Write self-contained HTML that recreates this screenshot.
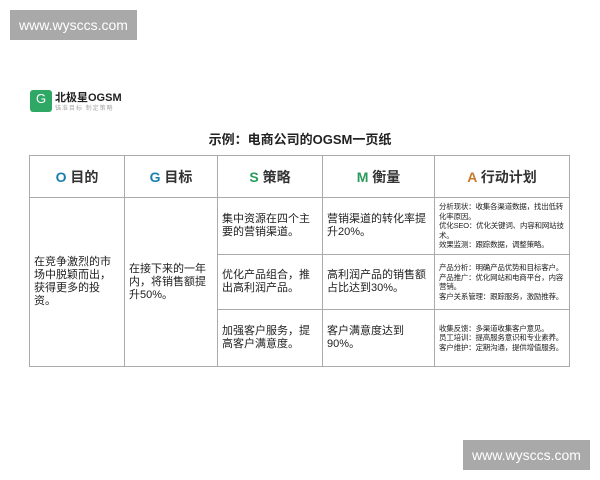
<!DOCTYPE html>
<html><head><meta charset="utf-8"><style>
body{margin:0;width:600px;height:480px;background:#fff;position:relative;overflow:hidden;font-family:"Liberation Sans","Noto Sans CJK SC",sans-serif;color:#222}
.wm{position:absolute;background:#a9a9a9;color:#fff;font-size:14px;width:127px;height:30px;line-height:30px;text-align:center}
.abs{position:absolute}
table{position:absolute;left:29px;top:155px;width:540px;table-layout:fixed;border-collapse:collapse;border:1.5px solid #666}
td{border:1px solid #aaa;font-size:11px;line-height:13px;padding:0 4px;vertical-align:middle;overflow:hidden}
th{border:1px solid #aaa;height:39px;font-size:14px;font-weight:bold;color:#333}
.s{font-size:7.5px;line-height:9.5px;padding:0 2px 0 4px;letter-spacing:-0.2px}
</style></head><body>
<div class="wm" style="left:10px;top:10px">www.wysccs.com</div>
<div class="wm" style="left:463px;top:440px">www.wysccs.com</div>
<div class="abs" style="left:30px;top:90px;width:22px;height:22px;background:#2fa866;border-radius:3px;color:#fff;font-size:13px;text-align:center;line-height:18px">G</div>
<div class="abs" style="left:55px;top:89px;font-size:11px;font-weight:bold;color:#222">北极星OGSM</div>
<div class="abs" style="left:55px;top:103px;font-size:6px;color:#aaa;letter-spacing:1px">锚准目标 制定策略</div>
<div class="abs" style="left:0;width:600px;text-align:center;top:129px;font-size:13px;font-weight:bold">示例：电商公司的OGSM一页纸</div>
<table>
<colgroup><col style="width:95px"><col style="width:93px"><col style="width:105px"><col style="width:112px"><col style="width:135px"></colgroup>
<tr><th><span style="color:#1a7fae">O</span> 目的</th><th><span style="color:#1a7fae">G</span> 目标</th><th><span style="color:#2a9a5a">S</span> 策略</th><th><span style="color:#2a9a5a">M</span> 衡量</th><th><span style="color:#c77a2a">A</span> 行动计划</th></tr>
<tr style="height:57px"><td rowspan="3">在竞争激烈的市场中脱颖而出，获得更多的投资。</td><td rowspan="3">在接下来的一年内，将销售额提升50%。</td><td>集中资源在四个主要的营销渠道。</td><td>营销渠道的转化率提升20%。</td><td class="s">分析现状：收集各渠道数据，找出低转化率原因。<br>优化SEO：优化关键词、内容和网站技术。<br>效果监测：跟踪数据，调整策略。</td></tr>
<tr style="height:55px"><td>优化产品组合，推出高利润产品。</td><td>高利润产品的销售额占比达到30%。</td><td class="s">产品分析：明确产品优势和目标客户。<br>产品推广：优化网站和电商平台，内容营销。<br>客户关系管理：跟踪服务，激励推荐。</td></tr>
<tr style="height:57px"><td>加强客户服务，提高客户满意度。</td><td>客户满意度达到90%。</td><td class="s">收集反馈：多渠道收集客户意见。<br>员工培训：提高服务意识和专业素养。<br>客户维护：定期沟通，提供增值服务。</td></tr>
</table>
</body></html>
